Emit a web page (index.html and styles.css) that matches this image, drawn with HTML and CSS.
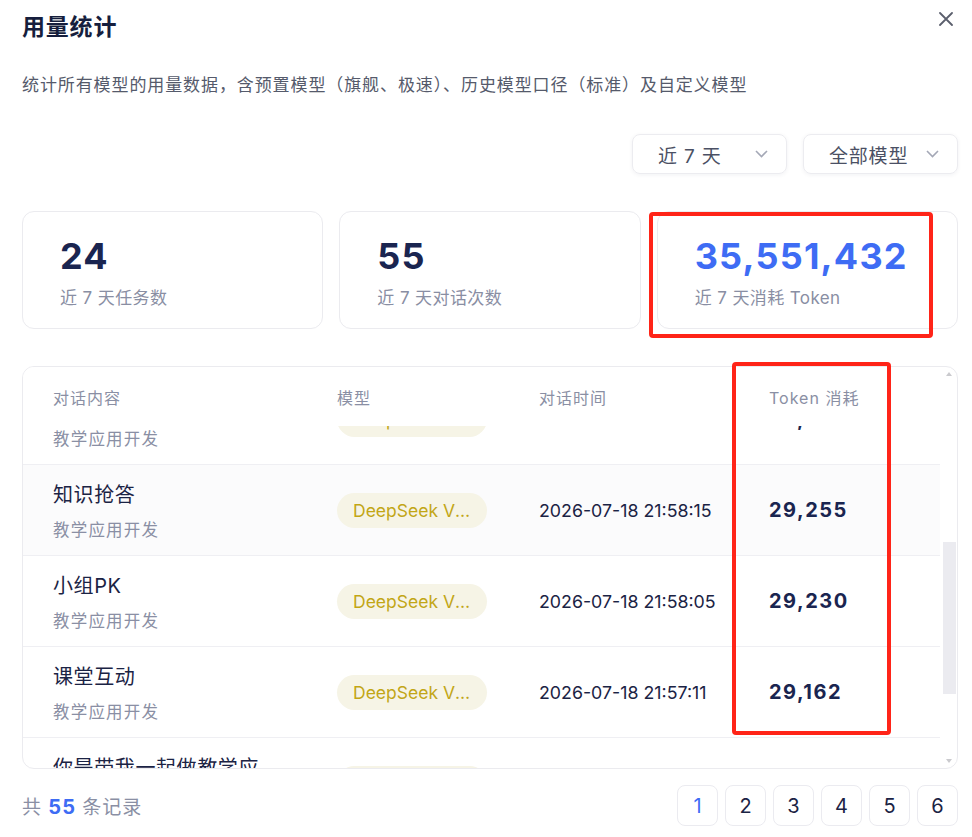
FILE: index.html
```html
<!DOCTYPE html>
<html lang="zh-CN">
<head>
    <meta charset="UTF-8">
    <title>用量统计</title>
    <link rel="stylesheet" href="styles.css">
</head>
<body>
    <div class="dialog">
        <div class="dialog-head">
            <h1>用量统计</h1>
            <button class="close-btn" aria-label="关闭">
                <svg width="14" height="14" viewBox="0 0 14 14"><path d="M1 1L13 13M13 1L1 13" stroke="#5b5f6d" stroke-width="1.8" stroke-linecap="round"/></svg>
            </button>
        </div>
        <p class="desc">统计所有模型的用量数据，含预置模型（旗舰、极速）、历史模型口径（标准）及自定义模型</p>

        <div class="filters">
            <div class="select">
                <span>近 7 天</span>
                <svg width="13" height="8" viewBox="0 0 13 8"><path d="M1 1l5.5 5.5L12 1" fill="none" stroke="#a4a8b6" stroke-width="1.6"/></svg>
            </div>
            <div class="select">
                <span>全部模型</span>
                <svg width="13" height="8" viewBox="0 0 13 8"><path d="M1 1l5.5 5.5L12 1" fill="none" stroke="#a4a8b6" stroke-width="1.6"/></svg>
            </div>
        </div>

        <div class="stats">
            <div class="stat-card">
                <div class="stat-num">24</div>
                <div class="stat-label">近 7 天任务数</div>
            </div>
            <div class="stat-card">
                <div class="stat-num">55</div>
                <div class="stat-label">近 7 天对话次数</div>
            </div>
            <div class="stat-card">
                <div class="stat-num blue">35,551,432</div>
                <div class="stat-label">近 7 天消耗 Token</div>
            </div>
        </div>

        <div class="table-box">
            <div class="table-wrap" id="tableWrap">
                <table class="usage-table">
                    <colgroup>
                        <col class="col-content">
                        <col class="col-model">
                        <col class="col-time">
                        <col class="col-token">
                    </colgroup>
                    <thead>
                        <tr>
                            <th>对话内容</th>
                            <th>模型</th>
                            <th>对话时间</th>
                            <th>Token 消耗</th>
                        </tr>
                    </thead>
                    <tbody>
                        <tr>
                            <td><div class="title">课堂签到</div><div class="sub">教学应用开发</div></td>
                            <td><span class="pill">DeepSeek V3.2</span></td>
                            <td class="time">2026-07-18 22:04:12</td>
                            <td class="token">29,612</td>
                        </tr>
                        <tr>
                            <td><div class="title">随堂测验</div><div class="sub">教学应用开发</div></td>
                            <td><span class="pill">DeepSeek V3.2</span></td>
                            <td class="time">2026-07-18 22:01:37</td>
                            <td class="token">29,480</td>
                        </tr>
                        <tr>
                            <td><div class="title">作业批改</div><div class="sub">教学应用开发</div></td>
                            <td><span class="pill">DeepSeek V3.2</span></td>
                            <td class="time">2026-07-18 22:00:09</td>
                            <td class="token">29,391</td>
                        </tr>
                        <tr>
                            <td><div class="title">错题本</div><div class="sub">教学应用开发</div></td>
                            <td><span class="pill">DeepSeek V3.2</span></td>
                            <td class="time">2026-07-18 21:59:21</td>
                            <td class="token">29,318</td>
                        </tr>
                        <tr>
                            <td><div class="title">随机点名</div><div class="sub">教学应用开发</div></td>
                            <td><span class="pill">DeepSeek V3.2</span></td>
                            <td class="time">2026-07-18 21:58:40</td>
                            <td class="token">29,287</td>
                        </tr>
                        <tr class="hover">
                            <td><div class="title">知识抢答</div><div class="sub">教学应用开发</div></td>
                            <td><span class="pill">DeepSeek V3.2</span></td>
                            <td class="time">2026-07-18 21:58:15</td>
                            <td class="token">29,255</td>
                        </tr>
                        <tr>
                            <td><div class="title">小组PK</div><div class="sub">教学应用开发</div></td>
                            <td><span class="pill">DeepSeek V3.2</span></td>
                            <td class="time">2026-07-18 21:58:05</td>
                            <td class="token">29,230</td>
                        </tr>
                        <tr>
                            <td><div class="title">课堂互动</div><div class="sub">教学应用开发</div></td>
                            <td><span class="pill">DeepSeek V3.2</span></td>
                            <td class="time">2026-07-18 21:57:11</td>
                            <td class="token">29,162</td>
                        </tr>
                        <tr>
                            <td><div class="title">你是带我一起做教学应用的助手吗</div><div class="sub">教学应用开发</div></td>
                            <td><span class="pill">DeepSeek V3.2</span></td>
                            <td class="time">2026-07-18 21:56:48</td>
                            <td class="token">29,104</td>
                        </tr>
                        <tr>
                            <td><div class="title">课程设计</div><div class="sub">教学应用开发</div></td>
                            <td><span class="pill">DeepSeek V3.2</span></td>
                            <td class="time">2026-07-18 21:55:02</td>
                            <td class="token">28,977</td>
                        </tr>
                    </tbody>
                </table>
            </div>
            <div class="scrollbar">
                <span class="arrow-up"></span>
                <span class="thumb"></span>
                <span class="arrow-down"></span>
            </div>
        </div>

        <div class="footer">
            <div class="total">共 <b>55</b> 条记录</div>
            <div class="pager">
                <button class="page active">1</button>
                <button class="page">2</button>
                <button class="page">3</button>
                <button class="page">4</button>
                <button class="page">5</button>
                <button class="page">6</button>
            </div>
        </div>
    </div>

    <!-- red annotation frames -->
    <div class="mark mark-total"></div>
    <div class="mark mark-token"></div>

    <script>
        document.getElementById('tableWrap').scrollTop = 416;
    </script>
</body>
</html>
```

FILE: styles.css
```css
html, body {
    margin: 0;
    background: #ffffff;
    font-family: Inter, "Noto Sans CJK SC", sans-serif;
    color: #1b2344;
}

.dialog {
    padding: 12px 14px 0 22px;
}

.dialog-head {
    display: flex;
    justify-content: space-between;
    align-items: flex-start;
    height: 30px;
}

.dialog-head h1 {
    margin: 0;
    font-size: 23px;
    line-height: 30px;
    font-weight: 700;
    letter-spacing: 0.8px;
    color: #161e3d;
}

.close-btn {
    width: 20px;
    height: 20px;
    margin: -3px 2px 0 0;
    padding: 0;
    border: none;
    background: none;
    display: flex;
    align-items: center;
    justify-content: center;
}

.desc {
    margin: 30px 0 0;
    font-size: 17px;
    line-height: 26px;
    letter-spacing: 0.9px;
    color: #555a6b;
}

.filters {
    display: flex;
    justify-content: flex-end;
    gap: 16px;
    margin-top: 36px;
}

.select {
    box-sizing: border-box;
    width: 155px;
    height: 40px;
    padding: 0 18px 0 25px;
    display: flex;
    align-items: center;
    justify-content: space-between;
    border: 1px solid #ececf0;
    border-radius: 8px;
    box-shadow: 0 1px 4px rgba(20, 30, 60, 0.06);
    font-size: 19px;
    letter-spacing: 0.8px;
    color: #4b5064;
}

.stats {
    display: grid;
    grid-template-columns: repeat(3, 1fr);
    gap: 16px;
    margin-top: 37px;
}

.stat-card {
    height: 118px;
    box-sizing: border-box;
    padding: 22px 37px 0;
    border: 1px solid #ebebef;
    border-radius: 12px;
}

.stat-num {
    font-size: 36px;
    line-height: 44px;
    font-weight: 700;
    letter-spacing: 1.2px;
    color: #1a2550;
}

.stat-num.blue {
    color: #3e6cf4;
}

.stat-label {
    margin-top: 8px;
    font-size: 17px;
    line-height: 24px;
    letter-spacing: 0.4px;
    color: #898ea3;
}

.table-box {
    position: relative;
    margin-top: 37px;
}

.table-wrap {
    height: 403px;
    box-sizing: border-box;
    border: 1px solid #ebebef;
    border-radius: 12px;
    overflow-y: auto;
    scrollbar-width: none;
}

.table-wrap::-webkit-scrollbar {
    display: none;
}

.scrollbar {
    position: absolute;
    top: 1px;
    right: 1px;
    bottom: 1px;
    width: 17px;
}

.scrollbar .arrow-up,
.scrollbar .arrow-down {
    position: absolute;
    left: 6px;
    width: 0;
    height: 0;
    border-left: 3.5px solid transparent;
    border-right: 3.5px solid transparent;
}

.scrollbar .arrow-up {
    top: 5px;
    border-bottom: 4px solid #cacace;
}

.scrollbar .arrow-down {
    bottom: 5px;
    border-top: 4px solid #cacace;
}

.scrollbar .thumb {
    position: absolute;
    top: 175px;
    left: 3px;
    width: 13px;
    height: 152px;
    background: #ebebf0;
}

.usage-table {
    width: 917px;
    table-layout: fixed;
    border-collapse: collapse;
}

.col-content { width: 314px; }
.col-model { width: 202px; }
.col-time { width: 230px; }
.col-token { width: 171px; }

.usage-table th {
    position: sticky;
    top: 0;
    z-index: 1;
    height: 59px;
    padding: 0;
    background: #ffffff;
    text-align: left;
    font-weight: 400;
    font-size: 16px;
    letter-spacing: 1px;
    color: #8a8fa4;
}

.usage-table th:first-child,
.usage-table td:first-child {
    padding-left: 30px;
}

.usage-table td {
    height: 90px;
    padding: 0;
    border-bottom: 1px solid #efeff3;
    vertical-align: middle;
}

.usage-table tr.hover td {
    background: #fbfbfc;
}

.title {
    padding-top: 2px;
    font-size: 20px;
    line-height: 28px;
    letter-spacing: 0.6px;
    color: #1b2344;
    white-space: nowrap;
    overflow: hidden;
    max-width: 207px;
}

.sub {
    margin-top: 9px;
    font-size: 16.5px;
    line-height: 24px;
    letter-spacing: 1.2px;
    color: #8a8fa4;
}

.pill {
    display: inline-block;
    box-sizing: border-box;
    width: 150px;
    height: 35px;
    padding: 0 15px 0 16px;
    border-radius: 18px;
    background: #f6f4e6;
    color: #c2a616;
    font-size: 17.5px;
    line-height: 35px;
    white-space: nowrap;
    overflow: hidden;
    text-overflow: ellipsis;
    vertical-align: middle;
}

.time {
    font-size: 17.8px;
    color: #1b2344;
}

.token {
    font-size: 20px;
    font-weight: 700;
    letter-spacing: 1.5px;
    color: #1a2550;
}

.footer {
    display: flex;
    justify-content: space-between;
    align-items: center;
    margin-top: 16px;
}

.total {
    font-size: 19px;
    letter-spacing: 1px;
    color: #8a8fa4;
}

.total b {
    color: #3e6cf4;
    font-size: 20px;
}

.pager {
    display: flex;
    gap: 7px;
}

.page {
    width: 41px;
    height: 41px;
    padding: 0;
    border: 1px solid #ebebf0;
    border-radius: 8px;
    background: #ffffff;
    font-family: Inter, sans-serif;
    font-size: 20px;
    color: #1b2344;
}

.page.active {
    color: #3e6cf4;
}

.mark {
    position: absolute;
    z-index: 10;
    box-sizing: border-box;
    border: 4px solid #ff2418;
    border-radius: 4px;
    pointer-events: none;
}

.mark-total {
    left: 649px;
    top: 212px;
    width: 284px;
    height: 126px;
}

.mark-token {
    left: 732px;
    top: 362px;
    width: 159px;
    height: 373px;
}
```
